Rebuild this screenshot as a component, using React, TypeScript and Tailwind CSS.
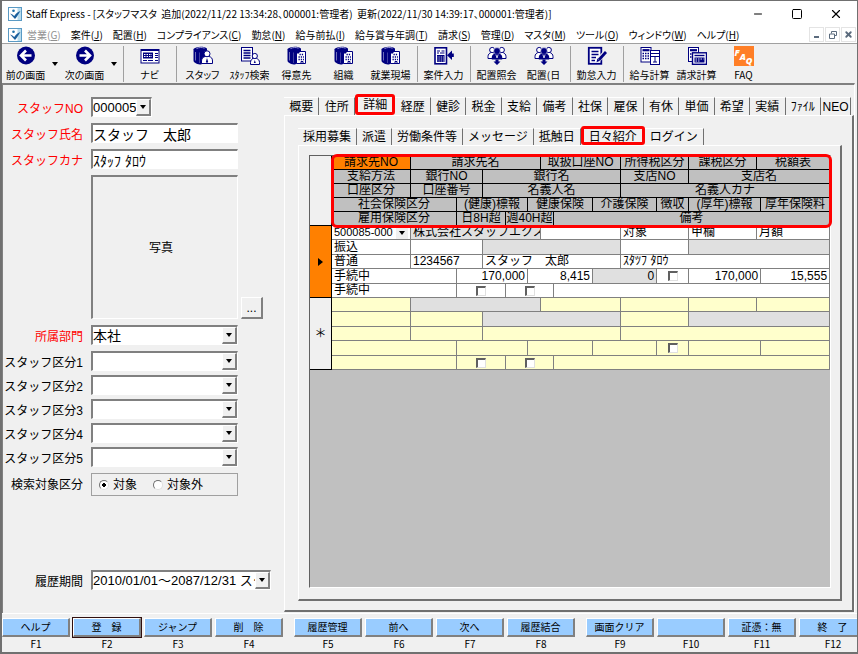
import type { ReactNode } from "react";
import { Minus, Square, X } from "lucide-react";
import clsx from "clsx";

type Cell = {
	span: number;
	text?: string;
	align?: "right";
	gray?: boolean;
	check?: string;
	select?: boolean;
	active?: boolean;
};

const MENUS = [
	{ label: "営業", accel: "G", disabled: true },
	{ label: "案件", accel: "J" },
	{ label: "配置", accel: "H" },
	{ label: "コンプライアンス", accel: "C" },
	{ label: "勤怠", accel: "N" },
	{ label: "給与前払", accel: "I" },
	{ label: "給与賞与年調", accel: "T" },
	{ label: "請求", accel: "S" },
	{ label: "管理", accel: "D" },
	{ label: "マスタ", accel: "M" },
	{ label: "ツール", accel: "O" },
	{ label: "ウィンドウ", accel: "W" },
	{ label: "ヘルプ", accel: "H" },
];

const MAIN_TABS = [
	"概要",
	"住所",
	"詳細",
	"経歴",
	"健診",
	"税金",
	"支給",
	"備考",
	"社保",
	"雇保",
	"有休",
	"単価",
	"希望",
	"実績",
	"ﾌｧｲﾙ",
	"NEO",
];

const SUB_TABS = [
	"採用募集",
	"派遣",
	"労働条件等",
	"メッセージ",
	"抵触日",
	"日々紹介",
	"ログイン",
];

const FUNCTION_KEYS = [
	["ヘルプ", "登　録", "ジャンプ", "削　除"],
	["履歴管理", "前へ", "次へ", "履歴結合"],
	["画面クリア", "", "証憑：無", "終　了"],
];

const HEADER_ROWS: Cell[][] = [
	[
		{ span: 1, text: "請求先NO", active: true },
		{ span: 5, text: "請求先名" },
		{ span: 3, text: "取扱口座NO" },
		{ span: 2, text: "所得税区分" },
		{ span: 1, text: "課税区分" },
		{ span: 2, text: "税額表" },
	],
	[
		{ span: 1, text: "支給方法" },
		{ span: 2, text: "銀行NO" },
		{ span: 6, text: "銀行名" },
		{ span: 2, text: "支店NO" },
		{ span: 3, text: "支店名" },
	],
	[
		{ span: 1, text: "口座区分" },
		{ span: 2, text: "口座番号" },
		{ span: 6, text: "名義人名" },
		{ span: 5, text: "名義人カナ" },
	],
	[
		{ span: 2, text: "社会保険区分" },
		{ span: 3, text: "(健康)標報" },
		{ span: 3, text: "健康保険" },
		{ span: 2, text: "介護保険" },
		{ span: 1, text: "徴収" },
		{ span: 2, text: "(厚年)標報" },
		{ span: 1, text: "厚年保険料" },
	],
	[
		{ span: 2, text: "雇用保険区分" },
		{ span: 2, text: "日8H超" },
		{ span: 3, text: "週40H超" },
		{ span: 7, text: "備考" },
	],
];

const RECORD: Cell[][] = [
	[
		{ span: 1, text: "500085-000", select: true },
		{ span: 5, text: "株式会社スタッフエクス", gray: true },
		{ span: 3 },
		{ span: 2, text: "対象" },
		{ span: 1, text: "甲欄" },
		{ span: 2, text: "月額" },
	],
	[
		{ span: 1, text: "振込" },
		{ span: 2 },
		{ span: 6, gray: true },
		{ span: 2 },
		{ span: 3, gray: true },
	],
	[
		{ span: 1, text: "普通" },
		{ span: 2, text: "1234567" },
		{ span: 6, text: "スタッフ　太郎" },
		{ span: 5, text: "ｽﾀﾂﾌ ﾀﾛｳ" },
	],
	[
		{ span: 2, text: "手続中" },
		{ span: 3, text: "170,000", align: "right" },
		{ span: 3, text: "8,415", align: "right" },
		{ span: 2, text: "0", align: "right", gray: true },
		{ span: 1, check: "徴収" },
		{ span: 2, text: "170,000", align: "right" },
		{ span: 1, text: "15,555", align: "right" },
	],
	[
		{ span: 2, text: "手続中" },
		{ span: 2, check: "日8H超" },
		{ span: 3, check: "週40H超" },
		{ span: 7 },
	],
];

// same cell layout as a saved record, without values
const NEW_RECORD: Cell[][] = RECORD.map((row, rowIndex) =>
	row.map(({ span, gray, check }) => ({
		span,
		check,
		gray: gray && rowIndex < 3,
	})),
);

const SUNKEN =
	"border-t-2 border-l-2 border-r border-b border-t-[#808080] border-l-[#808080] border-r-white border-b-white";
const RAISED =
	"border-t border-l border-r-2 border-b-2 border-t-white border-l-white border-r-[#808080] border-b-[#808080]";

function AppLogo() {
	return (
		<svg viewBox="0 0 14 14" className="h-[14px] w-[14px] shrink-0">
			<rect x="0.5" y="0.5" width="13" height="13" fill="#fff" stroke="#5a9ac4" />
			<rect x="9.5" y="1" width="3.5" height="12" fill="#b8dcee" />
			<circle cx="5.5" cy="3.8" r="1.3" fill="#1d6fa8" />
			<path d="M2 6.5 C4 7 5 8 6.2 9 C8 6.5 10 4.8 12.5 4 C10.5 6.5 9.5 9.5 7 12 C5.5 10.5 4 8.5 2 6.5 Z" fill="#1a5f9c" />
		</svg>
	);
}

function Icon({ children }: { children: ReactNode }) {
	return (
		<svg viewBox="0 0 20 20" className="h-5 w-5" fill="none" stroke="#000080">
			{children}
		</svg>
	);
}

function ArrowIcon({ right }: { right?: boolean }) {
	return (
		<Icon>
			<circle cx="10" cy="9.5" r="9" fill="#000080" stroke="none" />
			<path
				d={right ? "M4.5 9.5 H14 M10 4.5 L15 9.5 L10 14.5" : "M15.5 9.5 H6 M10 4.5 L5 9.5 L10 14.5"}
				stroke="#fff"
				strokeWidth="2.6"
			/>
		</Icon>
	);
}

function NaviIcon() {
	return (
		<Icon>
			<rect x="1" y="3.5" width="18" height="13.5" fill="#fff" />
			<path d="M1 4.2 H19" strokeWidth="1.6" />
			<rect x="3" y="6.5" width="10" height="6" fill="#000080" stroke="none" />
			<path d="M4 8.5 H12 M4 10.5 H12" stroke="#fff" strokeDasharray="1.5 1" />
			<path d="M15 7.5 H18 M15 9.5 H18 M15 11.5 H18 M3 14.5 H7 M8 14.5 H13 M15 14.5 H18" />
		</Icon>
	);
}

function Cylinder() {
	return (
		<>
			<path d="M0.5 3 V14.5 C0.5 17 5 18.5 8 18.5 L14 15 V3 Z" fill="#000080" stroke="none" />
			<path d="M0.5 3 C2 0.5 11 -0.5 14 2.5 C14 5 9 6 7 5.5 C4 5.5 1 4.5 0.5 3 Z" fill="#000080" stroke="none" />
			<path d="M3.5 2.6 C6 1.2 9.5 1.2 11.5 2.2" stroke="#9c9cd4" />
			<path d="M2.5 6 V14.5" stroke="#7070b8" />
			<path d="M6.5 6.5 V17" stroke="#5050a8" strokeWidth="0.8" />
		</>
	);
}

function StaffIcon() {
	return (
		<Icon>
			<Cylinder />
			<path d="M8.5 17.5 V15 C8.5 12 10.5 11 12 10.5 H16 C18 11 19.5 12 19.5 15 V17.5 Z" fill="#fff" />
			<circle cx="14" cy="7.8" r="3" fill="#fff" />
			<path d="M14 12 L12.8 16 L14 17 L15.2 16 Z" fill="#000080" stroke="none" />
		</Icon>
	);
}

function StaffSearchIcon() {
	return (
		<Icon>
			<rect x="1.5" y="1.5" width="11" height="13.5" fill="#fff" />
			<path d="M3.5 4.5 H10.5 M3.5 7 H10.5 M3.5 9.5 H10.5 M3.5 12 H10.5" strokeWidth="1.3" />
			<path d="M10.5 18.5 V16.5 C10.5 14 12 13 13 12.5 H16.5 C18 13 19.5 14 19.5 16.5 V18.5 Z" fill="#fff" />
			<circle cx="14.8" cy="10" r="2.6" fill="#fff" />
			<path d="M14.8 14 L13.8 17 H15.8 Z" fill="#000080" stroke="none" />
		</Icon>
	);
}

function BuildingIcon() {
	return (
		<Icon>
			<Cylinder />
			<path d="M9.5 17.5 V7 H12 V5.5 H18.5 V17.5 Z" fill="#fff" />
			<path d="M12.5 8.5 H17 M11.5 11 H17 M11.5 13.5 H17" strokeWidth="1.4" strokeDasharray="1.3 1" />
			<path d="M14 17.5 V15.5 H16 V17.5" />
		</Icon>
	);
}

function CaseInputIcon() {
	return (
		<Icon>
			<rect x="1" y="1.8" width="11.5" height="16" fill="#fff" strokeWidth="1.6" />
			<path d="M3 5 H6 M7.5 5 H10.5 M3 7 H5 M6 7 H10.5" strokeWidth="1.2" />
			<rect x="3" y="9" width="7.5" height="7" fill="#000080" stroke="none" />
			<path d="M3.5 11 H10 M3.5 13 H10 M3.5 15 H10" stroke="#fff" strokeDasharray="1 0.8" strokeWidth="0.8" />
			<path d="M19.8 7.5 V11 H18 V14 L13 9.2 L18 4.5 V7.5 Z" fill="#000080" stroke="none" />
		</Icon>
	);
}

function PeopleIcon() {
	return (
		<Icon>
			<path d="M1 12.5 V10.5 C1 8.5 2.5 7 4 6.5 H7 L8 12.5 Z" fill="#fff" />
			<path d="M19 12.5 V10.5 C19 8.5 17.5 7 16 6.5 H13 L12 12.5 Z" fill="#fff" />
			<circle cx="5.2" cy="4" r="2.6" fill="#fff" />
			<circle cx="14.8" cy="4" r="2.6" fill="#fff" />
			<circle cx="10" cy="5" r="3.4" fill="#000080" stroke="#fff" strokeWidth="0.6" />
			<path d="M4.8 13.5 V11 C4.8 9 6.5 8 8 7.5 H12 C13.5 8 15.2 9 15.2 11 V13.5 Z" fill="#000080" stroke="none" />
			<path d="M8.9 8.5 L10 12 L11.1 8.5" stroke="#fff" strokeWidth="0.8" />
			<path d="M6.5 15.5 H8.5 V13.5 H11.5 V15.5 H13.5 L10 19 Z" fill="#000080" stroke="none" />
		</Icon>
	);
}

function AttendanceIcon() {
	return (
		<Icon>
			<rect x="1.8" y="1.8" width="12.5" height="16" fill="#fff" strokeWidth="1.8" />
			<path d="M4.5 5.5 H11.5 M4.5 8.5 H11.5 M4.5 11.5 H9 M4.5 14.5 H8" strokeWidth="1.4" />
			<path d="M19 5.5 L11 14.5" stroke="#f0f0f0" strokeWidth="4.5" />
			<path d="M19 6 L12 13.8" strokeWidth="2.8" />
			<path d="M10.4 12.4 L9.5 16.2 L13 14.8 Z" fill="#000080" stroke="none" />
		</Icon>
	);
}

function PayrollIcon() {
	return (
		<Icon>
			<rect x="1" y="1.5" width="10" height="14.5" fill="#fff" />
			<path d="M2.5 4.2 H9.5" strokeWidth="2.2" />
			<path d="M2.5 7.5 H9.5 M2.5 10 H9.5 M2.5 12.5 H9.5" strokeWidth="1.4" strokeDasharray="1.5 1" />
			<rect x="10.5" y="4.5" width="9" height="14" fill="#fff" />
			<path d="M10.5 7.5 H19.5 M10.5 10.5 H19.5 M13 16 H17 M15 10.5 V16" />
		</Icon>
	);
}

function BillingIcon() {
	return (
		<Icon>
			<rect x="1.5" y="1.5" width="10" height="14" fill="#fff" />
			<path d="M3 4.2 H10" strokeWidth="2.2" />
			<path d="M3 8 H10 M3 11 H10" strokeWidth="1.4" strokeDasharray="1.5 1" />
			<rect x="5.5" y="6.8" width="14" height="11.5" fill="#fff" strokeWidth="1.4" />
			<path d="M7.5 9.5 H17.5" strokeWidth="1.4" />
			<rect x="7.5" y="11.5" width="10" height="5" fill="#000080" stroke="none" />
			<path d="M8.5 13 H16.5 M8.5 15 H13" stroke="#fff" strokeWidth="0.9" strokeDasharray="1.5 1" />
		</Icon>
	);
}

function FaqIcon() {
	return (
		<span
			aria-hidden="true"
			className="flex h-5 w-5 items-center justify-center bg-[#ff7f27] font-['Open_Sans',sans-serif] text-[9px] leading-none font-extrabold text-white italic"
		>
			<span className="-translate-y-1">F</span>
			<span>A</span>
			<span className="translate-y-1">Q</span>
		</span>
	);
}

function Caret() {
	return (
		<svg viewBox="0 0 6 4" className="h-1 w-[6px]">
			<path d="M0 0 H6 L3 4 Z" fill="#000" />
		</svg>
	);
}

function ToolButton({ label, icon }: { label: string; icon: ReactNode }) {
	return (
		<button
			type="button"
			className="flex w-[47px] shrink-0 flex-col items-center gap-[2px] whitespace-nowrap text-[10px] leading-[14px]"
		>
			{icon}
			{label}
		</button>
	);
}

function DropButton({ label }: { label: string }) {
	return (
		<button
			type="button"
			aria-label={label}
			className="flex h-9 w-3 shrink-0 items-center justify-center"
		>
			<Caret />
		</button>
	);
}

function ToolSeparator() {
	return <span className="mr-[2px] ml-[3px] h-9 w-[1px] shrink-0 bg-[#a0a0a0]" />;
}

function Toolbar() {
	return (
		<div className="flex h-10 items-start overflow-hidden border-t border-[#a0a0a0] bg-[#f0f0f0] pt-[2px] [font-feature-settings:'palt']">
			<ToolButton label="前の画面" icon={<ArrowIcon />} />
			<DropButton label="前の画面の履歴" />
			<ToolButton label="次の画面" icon={<ArrowIcon right />} />
			<DropButton label="次の画面の履歴" />
			<ToolSeparator />
			<ToolButton label="ナビ" icon={<NaviIcon />} />
			<ToolSeparator />
			<ToolButton label="スタッフ" icon={<StaffIcon />} />
			<ToolButton label="ｽﾀｯﾌ検索" icon={<StaffSearchIcon />} />
			<ToolButton label="得意先" icon={<BuildingIcon />} />
			<ToolButton label="組織" icon={<BuildingIcon />} />
			<ToolButton label="就業現場" icon={<BuildingIcon />} />
			<ToolSeparator />
			<ToolButton label="案件入力" icon={<CaseInputIcon />} />
			<ToolSeparator />
			<ToolButton label="配置照会" icon={<PeopleIcon />} />
			<ToolButton label="配置(日" icon={<PeopleIcon />} />
			<ToolSeparator />
			<ToolButton label="勤怠入力" icon={<AttendanceIcon />} />
			<ToolSeparator />
			<ToolButton label="給与計算" icon={<PayrollIcon />} />
			<ToolButton label="請求計算" icon={<BillingIcon />} />
			<ToolButton label="FAQ" icon={<FaqIcon />} />
		</div>
	);
}

function TitleBar() {
	return (
		<header className="bg-white text-[10px] [font-feature-settings:'palt']">
			<div className="flex h-[25px] items-center gap-1 pr-1 pl-[6px]">
				<AppLogo />
				<h1 className="flex-1 truncate whitespace-pre">
					Staff Express - [スタッフマスタ  追加(2022/11/22 13:34:28、000001:管理者)  更新(2022/11/30 14:39:17、000001:管理者)]
				</h1>
				<button type="button" aria-label="最小化" className="flex w-[35px] justify-center">
					<Minus className="h-3 w-3" strokeWidth={2} />
				</button>
				<button type="button" aria-label="最大化" className="flex w-[35px] justify-center">
					<Square className="h-3 w-3" strokeWidth={2} />
				</button>
				<button type="button" aria-label="閉じる" className="flex w-[35px] justify-center">
					<X className="h-[14px] w-[14px]" strokeWidth={2} />
				</button>
			</div>
			<div className="flex h-[17px] items-center pl-[6px]">
				<AppLogo />
				<nav className="flex flex-1 gap-[10px] overflow-hidden pl-[5px] whitespace-nowrap">
					{MENUS.map((menu, index) => (
						<button
							key={index}
							type="button"
							disabled={menu.disabled}
							className="leading-4 disabled:text-[#909090]"
						>
							{menu.label}(<u>{menu.accel}</u>)
						</button>
					))}
				</nav>
				<div className="flex gap-[1px] pr-[1px] text-[#5b6b7d]">
					<button
						type="button"
						aria-label="子画面を最小化"
						className="flex h-[15px] w-[15px] items-end justify-center border border-[#e4e4e4] pb-[3px]"
					>
						<span className="h-[2px] w-[5px] bg-[#5b6b7d]" />
					</button>
					<button
						type="button"
						aria-label="子画面を元に戻す"
						className="flex h-[15px] w-[15px] items-center justify-center border border-[#e4e4e4]"
					>
						<svg viewBox="0 0 8 8" className="h-2 w-2" fill="none" stroke="currentColor">
							<path d="M2.5 2.5 V0.5 H7.5 V4.5 H5.5 M0.5 3 H5.5 V7.5 H0.5 Z" />
						</svg>
					</button>
					<button
						type="button"
						aria-label="子画面を閉じる"
						className="flex h-[15px] w-[15px] items-center justify-center border border-[#e4e4e4]"
					>
						<X className="h-[9px] w-[9px]" strokeWidth={5} />
					</button>
				</div>
			</div>
		</header>
	);
}

function FormRow({
	id,
	label,
	required,
	children,
}: {
	id: string;
	label: string;
	required?: boolean;
	children: ReactNode;
}) {
	return (
		<div className="flex items-center gap-2">
			<label
				htmlFor={id}
				className={clsx(
					"w-20 shrink-0 pt-1 text-right leading-4 whitespace-nowrap",
					required && "text-[#ff0000]",
				)}
			>
				{label}
			</label>
			{children}
		</div>
	);
}

function TextField({ id, value }: { id: string; value: string }) {
	return (
		<input
			id={id}
			type="text"
			defaultValue={value}
			className={clsx("h-5 w-[147px] bg-white text-[14px] leading-4", SUNKEN)}
		/>
	);
}

function SelectField({
	id,
	value = "",
	width = "w-[147px]",
	size = "text-[14px]",
}: {
	id: string;
	value?: string;
	width?: string;
	size?: string;
}) {
	return (
		<div className={clsx("relative flex h-5 bg-white", SUNKEN, width)}>
			<select
				id={id}
				className={clsx("mr-[15px] h-full min-w-0 flex-1 appearance-none overflow-hidden leading-4", size)}
			>
				<option>{value}</option>
			</select>
			<span
				className={clsx(
					"pointer-events-none absolute inset-y-0 right-0 flex w-[15px] items-center justify-center bg-[#f0f0f0]",
					RAISED,
				)}
			>
				<Caret />
			</span>
		</div>
	);
}

function StaffForm() {
	return (
		<form className="flex w-[281px] shrink-0 flex-col pt-3">
			<div className="flex flex-col gap-[6px]">
				<FormRow id="staff-no" label="スタッフNO" required>
					<SelectField id="staff-no" value="000005" width="w-[61px]" size="text-[13px]" />
				</FormRow>
				<FormRow id="staff-name" label="スタッフ氏名" required>
					<TextField id="staff-name" value="スタッフ　太郎" />
				</FormRow>
				<FormRow id="staff-kana" label="スタッフカナ" required>
					<TextField id="staff-kana" value="ｽﾀｯﾌ ﾀﾛｳ" />
				</FormRow>
			</div>

			{/* 写真 */}
			<div className="mt-[6px] flex items-end gap-[3px] pl-[88px]">
				<div className={clsx("flex h-[144px] w-[147px] items-center justify-center pr-2", SUNKEN)}>
					写真
				</div>
				<button
					type="button"
					aria-label="写真を選択"
					className={clsx("h-[22px] w-[22px] leading-4", RAISED)}
				>
					...
				</button>
			</div>

			<div className="mt-[6px]">
				<FormRow id="dept" label="所属部門" required>
					<SelectField id="dept" value="本社" />
				</FormRow>
			</div>
			<div className="mt-[6px] flex flex-col gap-1">
				{[1, 2, 3, 4, 5].map((n) => (
					<FormRow key={n} id={`class-${n}`} label={`スタッフ区分${n}`}>
						<SelectField id={`class-${n}`} />
					</FormRow>
				))}
			</div>

			<fieldset className="mt-[6px] flex items-center gap-2">
				<legend className="float-left w-20 text-right">検索対象区分</legend>
				<div className="flex h-[23px] w-[147px] items-center gap-4 border border-[#a0a0a0] pl-[7px]">
					{["対象", "対象外"].map((label, index) => (
						<label key={label} className="flex items-center gap-1">
							<input
								type="radio"
								name="search-target"
								defaultChecked={index === 0}
								className="h-[10px] w-[10px] appearance-none rounded-full border border-t-[#707070] border-r-[#e0e0e0] border-b-[#e0e0e0] border-l-[#707070] bg-white checked:bg-[radial-gradient(circle,#000_2px,#fff_2px)]"
							/>
							{label}
						</label>
					))}
				</div>
			</fieldset>

			<div className="mt-[74px]">
				<FormRow id="period" label="履歴期間">
					<SelectField
						id="period"
						value="2010/01/01～2087/12/31 スタッフ"
						width="w-[180px]"
						size="text-[13px]"
					/>
				</FormRow>
			</div>
		</form>
	);
}

function GridCheckbox({ label }: { label: string }) {
	return (
		<input
			type="checkbox"
			aria-label={label}
			className="mx-auto block h-[10px] w-[10px] appearance-none border-t-2 border-r border-b border-l-2 border-t-[#606060] border-r-[#e0e0e0] border-b-[#e0e0e0] border-l-[#606060] bg-white"
		/>
	);
}

function RecordBody({ rows, isNew }: { rows: Cell[][]; isNew?: boolean }) {
	return (
		<tbody>
			{rows.map((row, rowIndex) => (
				<tr key={rowIndex} className="odd:h-[14px] even:h-[15px]">
					{rowIndex === 0 && (
						<th
							rowSpan={5}
							scope="rowgroup"
							aria-label={isNew ? "新規行" : "選択行"}
							className={clsx(
								"border-r border-b border-black font-normal",
								isNew ? "bg-[#f0f0f0]" : "bg-[#ff8000]",
							)}
						>
							{isNew ? (
								"＊"
							) : (
								<svg viewBox="0 0 5 8" className="mx-auto h-2 w-[5px]">
									<path d="M0 0 L5 4 L0 8 Z" fill="#000" />
								</svg>
							)}
						</th>
					)}
					{row.map((cell, index) => (
						<td
							key={index}
							colSpan={cell.span}
							className={clsx(
								"border-r border-b border-[#808080] px-[2px] leading-[13px] whitespace-nowrap",
								cell.gray ? "overflow-hidden bg-[#e0e0e0]" : isNew ? "bg-[#ffffcc]" : "bg-white",
								cell.align === "right" && "text-right",
							)}
						>
							{cell.check && <GridCheckbox label={cell.check} />}
							{cell.select ? (
								<div className="relative flex h-[13px]">
									<select
										aria-label="請求先NO"
										className="w-full appearance-none text-[11px] leading-[13px]"
									>
										<option>{cell.text}</option>
									</select>
									<span className="pointer-events-none absolute inset-y-0 right-0 flex w-3 items-center justify-center bg-[#f0f0f0]">
										<Caret />
									</span>
								</div>
							) : (
								cell.text
							)}
						</td>
					))}
				</tr>
			))}
		</tbody>
	);
}

function BillingGrid() {
	return (
		<div className="relative min-h-0 flex-1 border border-t-[#606060] border-r-white border-b-white border-l-[#606060] bg-[#c0c0c0]">
			<table className="w-[520px] table-fixed border-separate border-spacing-0">
				<colgroup>
					<col className="w-[22px]" />
					<col className="w-[79px]" />
					<col className="w-[46px]" />
					<col className="w-[26px]" />
					<col className="w-[23px]" />
					<col className="w-[22px]" />
					<col className="w-[13px]" />
					<col className="w-[13px]" />
					<col className="w-[39px]" />
					<col className="w-[28px]" />
					<col className="w-[36px]" />
					<col className="w-[32px]" />
					<col className="w-[68px]" />
					<col className="w-[4px]" />
					<col className="w-[69px]" />
				</colgroup>
				<thead>
					{HEADER_ROWS.map((row, rowIndex) => (
						<tr key={rowIndex} className="h-[14px]">
							{rowIndex === 0 && (
								<td rowSpan={5} className="border-r border-b border-black bg-[#f0f0f0]" />
							)}
							{row.map((cell) => (
								<th
									key={cell.text}
									colSpan={cell.span}
									className={clsx(
										"border-r border-b border-black leading-[13px] font-normal whitespace-nowrap",
										cell.active ? "bg-[#ff8000]" : "bg-[#c0c0c0]",
									)}
								>
									{cell.text}
								</th>
							))}
						</tr>
					))}
				</thead>
				<RecordBody rows={RECORD} />
				<RecordBody rows={NEW_RECORD} isNew />
			</table>
			{/* 見出しの強調枠 */}
			<div className="pointer-events-none absolute -top-[2px] left-[21px] h-[74px] w-[501px] rounded-md border-[3px] border-[#ff0000]" />
		</div>
	);
}

function DetailTabs() {
	return (
		<section className="flex min-w-0 flex-1 flex-col pt-3 pb-[1px]">
			<div role="tablist" className="flex h-[18px] w-[567px]">
				{MAIN_TABS.map((tab) => (
					<button
						key={tab}
						type="button"
						role="tab"
						aria-selected={tab === "詳細"}
						className={clsx(
							"whitespace-nowrap",
							tab === "NEO" ? "w-[30px]" : "flex-1",
							tab === "詳細"
								? "-mt-[3px] rounded-[3px] border-[3px] border-[#ff0000]"
								: "border-t border-r border-t-white border-r-[#707070]",
						)}
					>
						{tab}
					</button>
				))}
			</div>
			<div className="flex min-h-0 flex-1 flex-col border-t border-r-2 border-b-2 border-l border-t-white border-r-[#707070] border-b-[#707070] border-l-white pt-3 pr-[10px] pb-[9px] pl-[13px]">
				<div role="tablist" className="flex h-[17px]">
					{SUB_TABS.map((tab) => (
						<button
							key={tab}
							type="button"
							role="tab"
							aria-selected={tab === "日々紹介"}
							className={clsx(
								"whitespace-nowrap",
								tab === "日々紹介"
									? "-mt-[2px] rounded-[3px] border-[3px] border-[#ff0000] px-[5px]"
									: "border-t border-r border-t-white border-r-[#707070] px-[5px]",
							)}
						>
							{tab}
						</button>
					))}
				</div>
				<div className="flex min-h-0 flex-1 flex-col border-t border-r-2 border-b-2 border-l border-t-white border-r-[#707070] border-b-[#707070] border-l-white pt-[9px] pr-[9px] pb-[11px] pl-[10px]">
					<BillingGrid />
				</div>
			</div>
		</section>
	);
}

function FunctionBar() {
	return (
		<footer className="flex gap-[11px] overflow-hidden border-t border-white bg-[#f0f0f0] pt-1 pb-[2px] text-[10px]">
			{FUNCTION_KEYS.map((group, groupIndex) => (
				<div key={groupIndex} className="flex shrink-0 gap-[3px]">
					{group.map((label, index) => {
						const keyName = `F${groupIndex * 4 + index + 1}`;
						return (
							<div key={keyName} className="flex w-[68px] flex-col items-center">
								<button
									type="button"
									aria-label={label || keyName}
									className={clsx(
										"h-[19px] w-full bg-[#99ccff] leading-[14px]",
										RAISED,
										keyName === "F2" && "outline outline-[#301010]",
									)}
								>
									{label}
								</button>
								<span className="leading-[13px]">{keyName}</span>
							</div>
						);
					})}
				</div>
			))}
		</footer>
	);
}

export default function App() {
	return (
		<div className="flex min-h-screen flex-col overflow-hidden border-t border-r border-b-2 border-l-2 border-[#707070] bg-[#f0f0f0] font-['Noto_Sans_CJK_JP',sans-serif] text-[12px] leading-4 text-black">
			<TitleBar />
			<Toolbar />
			<main className="mr-[2px] flex flex-1 border-t-2 border-r border-l border-t-[#808080] border-r-white border-l-[#808080] font-['Liberation_Sans','Noto_Sans_CJK_JP',sans-serif]">
				<StaffForm />
				<DetailTabs />
			</main>
			<FunctionBar />
		</div>
	);
}
